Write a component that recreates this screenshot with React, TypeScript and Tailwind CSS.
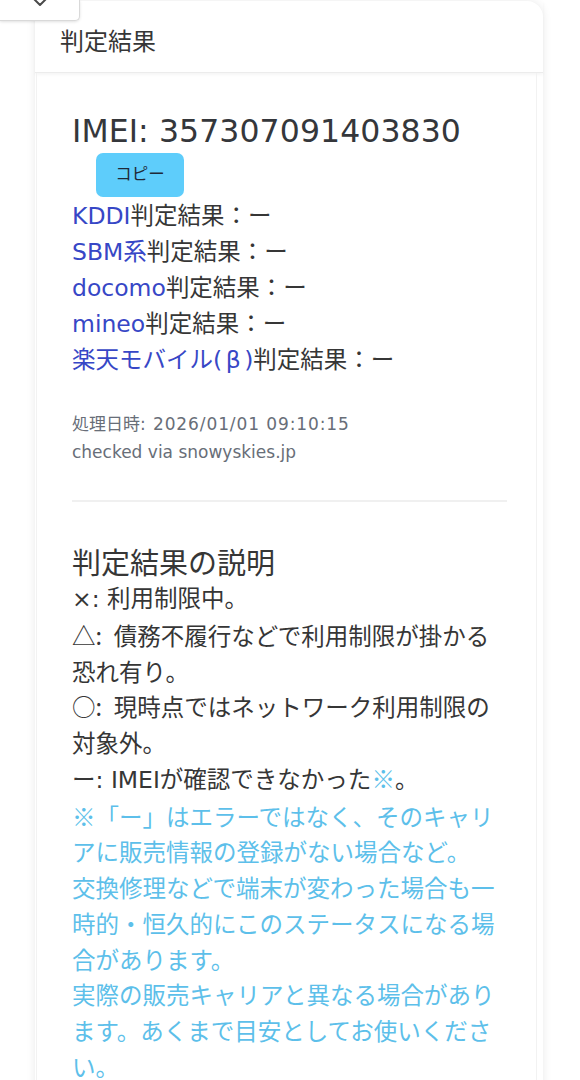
import React from "react";

const latin = { fontFamily: '"DejaVu Sans", "Noto Sans CJK JP", sans-serif' };
const cjk = { fontFamily: '"Noto Sans CJK JP", sans-serif' };

export default function App() {
  const results: { label: React.ReactNode; key: string }[] = [
    { key: "kddi", label: "KDDI" },
    { key: "sbm", label: "SBM系" },
    { key: "docomo", label: "docomo" },
    { key: "mineo", label: "mineo" },
    {
      key: "rakuten",
      label: (
        <>
          楽天モバイル(<span className="inline-block w-[22px] text-center">β</span>)
        </>
      ),
    },
  ];
  return (
    <div className="relative min-h-[1080px] w-[580px] overflow-hidden bg-white text-[#363636]" style={latin}>
      {/* top-left collapse tab */}
      <div className="absolute left-0 top-0 z-10 h-[21px] w-[80px] overflow-hidden rounded-br-[5px] border-b border-r border-[#d9d9d9] bg-white shadow-[0_1px_3px_rgba(0,0,0,0.12)]">
        <svg className="absolute left-[32px] top-[-8px]" width="16" height="16" viewBox="0 0 16 16" fill="none">
          <path d="M2.5 7.5 L8 13 L13.5 7.5" stroke="#4a4a4a" strokeWidth="2" strokeLinecap="round" strokeLinejoin="round" />
        </svg>
      </div>

      {/* card */}
      <div className="ml-[35px] mt-px w-[508px] rounded-t-[16px] bg-white shadow-[0_0_10px_rgba(0,0,0,0.09)]">
        <div className="flex h-[72px] items-center border-b border-[#ececec] pl-[25px] pt-[6px] shadow-[0_2px_3px_rgba(0,0,0,0.04)]">
          <span className="text-[24px] leading-[32px]" style={cjk}>判定結果</span>
        </div>

        <div className="ml-px mr-[6px] border-x border-[#f2f2f2] pb-[40px] pl-[35px] pr-[34px] pt-[40px]">
          <div className="text-[31.5px] leading-[36px] tracking-[0.1px] text-[#35373b]">IMEI: 357307091403830</div>
          <button
            className="ml-[24px] mt-[4px] flex h-[44px] w-[88px] items-center justify-center rounded-[7px] bg-[#5ecdfb] pb-[3px] text-[16.5px] text-[#1f2937]"
            style={cjk}
          >
            コピー
          </button>

          <div className="mt-px text-[23.5px] leading-[36px]">
            {results.map((r) => (
              <div key={r.key}>
                <span className="text-[#3747c6]">{r.label}</span>
                <span>判定結果：ー</span>
              </div>
            ))}
          </div>

          <div className="mt-[32px] text-[17px] leading-[28px] text-[#686e78]">
            <div>
              処理日時<span className="tracking-[0.9px]">: 2026/01/01 09:10:15</span>
            </div>
            <div>checked via snowyskies.jp</div>
          </div>

          <div className="mt-[34px] h-[2px] w-[435px] bg-[#f0f0f0]" />

          <h2 className="mt-[38px] text-[29px] leading-[42px]" style={cjk}>判定結果の説明</h2>

          <div className="text-[23.5px] leading-[35.75px]">
            <div>×: 利用制限中。</div>
            <div style={cjk}>{"△:\u2002債務不履行などで利用制限が掛かる恐れ有り。"}</div>
            <div style={cjk}>{"○:\u2002現時点ではネットワーク利用制限の対象外。"}</div>
            <div>
              ー: IMEIが確認できなかった<span className="text-[#5dbfea]" style={cjk}>※</span>。
            </div>
            <div className="text-[#5dbfea]" style={cjk}>
              <div>※「ー」はエラーではなく、そのキャリアに販売情報の登録がない場合など。</div>
              <div>交換修理などで端末が変わった場合も一時的・恒久的にこのステータスになる場合があります。</div>
              <div>実際の販売キャリアと異なる場合があります。あくまで目安としてお使いください。</div>
            </div>
          </div>
        </div>
      </div>
    </div>
  );
}
